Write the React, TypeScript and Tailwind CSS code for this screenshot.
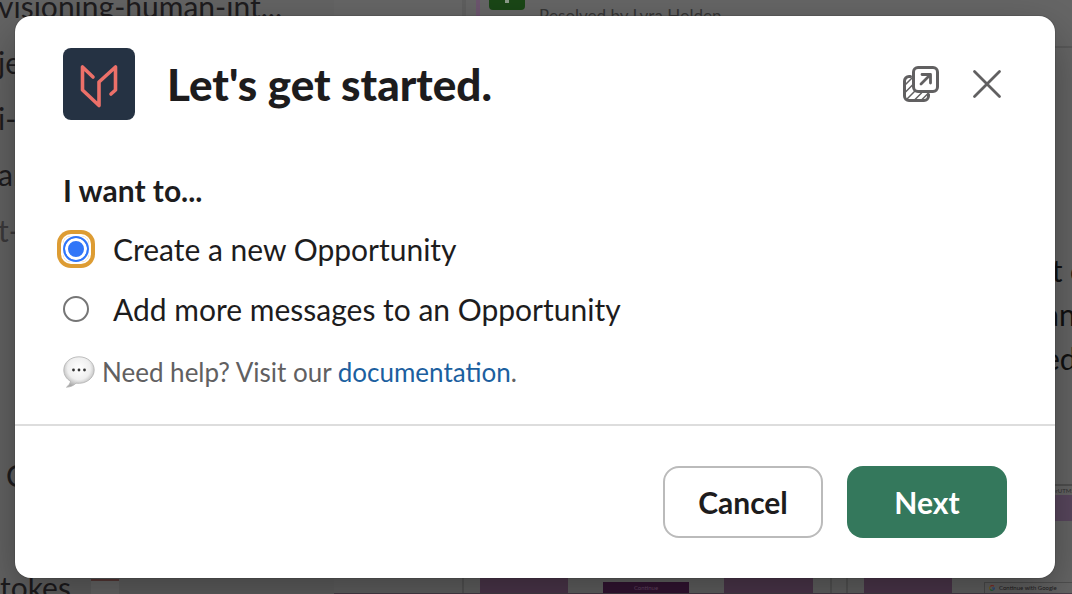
import { useState } from 'react';

const CHANNELS = ['visioning-human-int...', 'je', 'i-', 'ar', 't-'];

const OPTIONS = [
  { value: 'create', label: 'Create a new Opportunity' },
  { value: 'append', label: 'Add more messages to an Opportunity' },
];

function AppLogo() {
  return (
    <svg viewBox="0 0 72 72" className="size-[72px] shrink-0 rounded-lg bg-[#253243]" role="img" aria-label="App logo">
      <path
        d="M30 29L19.500 19V42L36 57.500V34L52.500 19V42L48 46"
        fill="none"
        stroke="#ec7069"
        strokeWidth="3.600"
        strokeLinecap="round"
        strokeLinejoin="round"
      />
    </svg>
  );
}

function NewWindowIcon() {
  return (
    <svg viewBox="0 0 36 36" className="size-9" fill="none" stroke="currentColor" strokeWidth="3" strokeLinecap="round" strokeLinejoin="round">
      <path d="M7.500 10.500H6a4.500 4.500 0 0 0-4.500 4.500V30A4.500 4.500 0 0 0 6 34.500H21A4.500 4.500 0 0 0 25.500 30V28.500" />
      <path d="M2 19L9 12M2 26.500L9.500 19M4 33L12 25M11.500 34L18.500 27M18.500 34L25 27.500" strokeWidth="1.500" />
      <rect x="10.500" y="1.500" width="24" height="24" rx="4.500" fill="#fff" />
      <path d="M18 18L27 9M19 8.500H27.500V17" strokeWidth="2.800" />
    </svg>
  );
}

function CloseIcon() {
  return (
    <svg viewBox="0 0 36 36" className="size-9" fill="none" stroke="currentColor" strokeWidth="2.800" strokeLinecap="round">
      <path d="M5.500 5.500L30.500 30.500M30.500 5.500L5.500 30.500" />
    </svg>
  );
}

function SpeechBubble() {
  return (
    <svg viewBox="0 0 32 32" className="size-8 shrink-0" aria-hidden="true">
      <defs>
        <radialGradient id="bubble" cx="50%" cy="38%" r="62%">
          <stop offset="0" stopColor="#fff" />
          <stop offset="0.600" stopColor="#efefef" />
          <stop offset="1" stopColor="#a8a8a8" />
        </radialGradient>
      </defs>
      <path
        d="M16 .8C7.500 .8 .8 6.500 .8 14C.8 19 3.500 23 7.500 25.200C7.300 27.500 5.500 29.500 3.500 31.200C7.500 31 11 29.300 13 27.200C23 28.500 31.200 22 31.200 14C31.200 6.500 24.500 .8 16 .8Z"
        fill="url(#bubble)"
        stroke="#b0b0b0"
        strokeWidth=".8"
      />
      <circle cx="10.500" cy="14" r="1.400" fill="#333" />
      <circle cx="16" cy="14" r="1.400" fill="#333" />
      <circle cx="21.500" cy="14" r="1.400" fill="#333" />
    </svg>
  );
}

function GoogleMark() {
  return (
    <svg viewBox="0 0 10 10" className="size-[6px] shrink-0" fill="none" strokeWidth="2">
      <path d="M8 2A4 4 0 0 0 2 2.500" stroke="#8a2f28" />
      <path d="M2 2.500A4 4 0 0 0 2 7.500" stroke="#7a6420" />
      <path d="M2 7.500A4 4 0 0 0 7 8.300" stroke="#27633a" />
      <path d="M7 8.300A4 4 0 0 0 9 5H5" stroke="#2c4c80" />
    </svg>
  );
}

// Dimmed workspace that shows round the edges of the dialog
function Workspace() {
  return (
    <div className="absolute inset-0 flex overflow-hidden bg-[#666666] text-[#1e1c1e]" aria-hidden="true">
      <div className="flex w-[334px] shrink-0 flex-col justify-between bg-[#646464] text-[30px] leading-[56px]">
        <div className="-mt-[22px] -ml-0.5">
          {CHANNELS.map((name) => (
            <div key={name} className={name === 't-' ? 'text-[#3c3a3c]' : ''}>{name}</div>
          ))}
        </div>
        <div className="-mb-[21px]">
          <div className="h-14 pl-1.5">C</div>
          <div className="h-14" />
          <div className="flex h-14 items-start gap-5">
            <span>tokes</span>
            <span className="mt-5 h-8 w-7 border-t-2 border-[#5a3a38] bg-[#6c6c6c]" />
          </div>
        </div>
      </div>

      <div className="flex min-w-0 flex-1 flex-col">
        <div className="flex h-12 border-b-2 border-[#5a5a5a] pl-32">
          <div className="w-[14px] border-l-4 border-[#5f5f5f]" />
          <div className="w-[13px] border-l-4 border-[#6d566f]" />
          <div className="flex h-[10px] w-9 justify-center rounded-b-sm bg-[#1a4716]">
            <span className="h-[3px] w-1 bg-[#8c9c8a]" />
          </div>
          <div className="pt-1 pl-3.5 text-[17px] leading-6 text-[#353535]">Resolved by Lyra Holden</div>
        </div>

        <div className="flex flex-1 flex-col items-end pt-[200px] text-[30px] leading-[44px] text-[#111]">
          <div className="flex w-7 flex-col">
            <span className="whitespace-nowrap">&nbsp;t c</span>
            <span>an</span>
            <span>ed</span>
          </div>
          <div className="mt-[104px] w-7 border-t-2 border-[#505050] text-[6px] leading-[9px] text-[#333]">/userUTM5</div>
          <div className="h-[26px] w-7 bg-[#5a485f]" />
        </div>

        <div className="flex h-4 border-b border-[#4a3f4a] pl-32">
          <div className="w-[18px] border-l-2 border-[#585858]" />
          <div className="w-[88px] bg-[#50394f]" />
          <div className="flex w-[156px] justify-center pt-1">
            <div className="h-[11px] w-[86px] bg-[#351535] text-center text-[6px] leading-[11px] text-[#6a4a69]">Continue</div>
          </div>
          <div className="w-[89px] bg-[#50394f]" />
          <div className="flex w-[51px] justify-center">
            <div className="w-[18px] border-x-2 border-[#585858]" />
          </div>
          <div className="w-[88px] bg-[#50394f]" />
          <div className="flex flex-1 pt-1 pl-8">
            <div className="flex flex-1 items-center gap-1 border-t border-l border-[#505050] pl-1 text-[6px] leading-3 whitespace-nowrap">
              <GoogleMark />
              Continue with Google
            </div>
          </div>
        </div>
      </div>
    </div>
  );
}

export default function App() {
  const [choice, setChoice] = useState('create');

  return (
    <div className="relative flex min-h-screen items-start py-4 pr-[17px] pl-[15px] font-['Lato',sans-serif] text-[#1d1c1d]">
      <Workspace />

      <div
        role="dialog"
        aria-labelledby="dialog-title"
        className="relative flex-1 rounded-2xl bg-white shadow-[0_0_0_1px_rgba(29,28,29,0.13),0_18px_48px_0_rgba(0,0,0,0.35)]"
      >
        <header className="flex items-center gap-8 px-12 pt-8">
          <AppLogo />
          <h1 id="dialog-title" className="flex-1 text-[44px] leading-[60px] font-black">Let's get started.</h1>
          <div className="flex gap-[30px] text-[#616061]">
            <button type="button" aria-label="Open in new window"><NewWindowIcon /></button>
            <button type="button" aria-label="Close" className="mr-0.5"><CloseIcon /></button>
          </div>
        </header>

        <form onSubmit={(e) => e.preventDefault()}>
          <div className="px-12 pt-12 pb-[30px]">
            <fieldset>
              <legend className="text-[30px] leading-[44px] font-bold">I want to...</legend>
              <div className="flex flex-col gap-4 pt-[15px]">
                {OPTIONS.map((option) => (
                  <label key={option.value} className="flex items-center gap-6 text-[30px] leading-[44px]">
                    <span className="flex rounded-lg has-checked:shadow-[0_0_0_2px_#fff,0_0_0_6px_#dd9c33]">
                      <input
                        type="radio"
                        name="action"
                        value={option.value}
                        checked={choice === option.value}
                        onChange={() => setChoice(option.value)}
                        className="size-[26px] appearance-none rounded-full border-2 border-[#767676] bg-white outline-none checked:border-[#3176f8] checked:bg-[#3176f8] checked:shadow-[inset_0_0_0_3px_#fff]"
                      />
                    </span>
                    {option.label}
                  </label>
                ))}
              </div>
            </fieldset>
            <div className="flex items-center gap-[7px] pt-[19px] text-[26px] leading-[44px] text-[#616061]">
              <SpeechBubble />
              <p>
                Need help? Visit our <a href="#documentation" className="text-[#1c5f9f]">documentation</a>.
              </p>
            </div>
          </div>

          <footer className="flex justify-end gap-6 border-t-2 border-[#dddddd] px-12 py-10 text-[30px] font-bold">
            <button type="button" className="h-[72px] w-40 rounded-2xl border-2 border-[#bbbbbb]">Cancel</button>
            <button type="submit" className="h-[72px] w-40 rounded-2xl bg-[#34785c] text-white">Next</button>
          </footer>
        </form>
      </div>
    </div>
  );
}
